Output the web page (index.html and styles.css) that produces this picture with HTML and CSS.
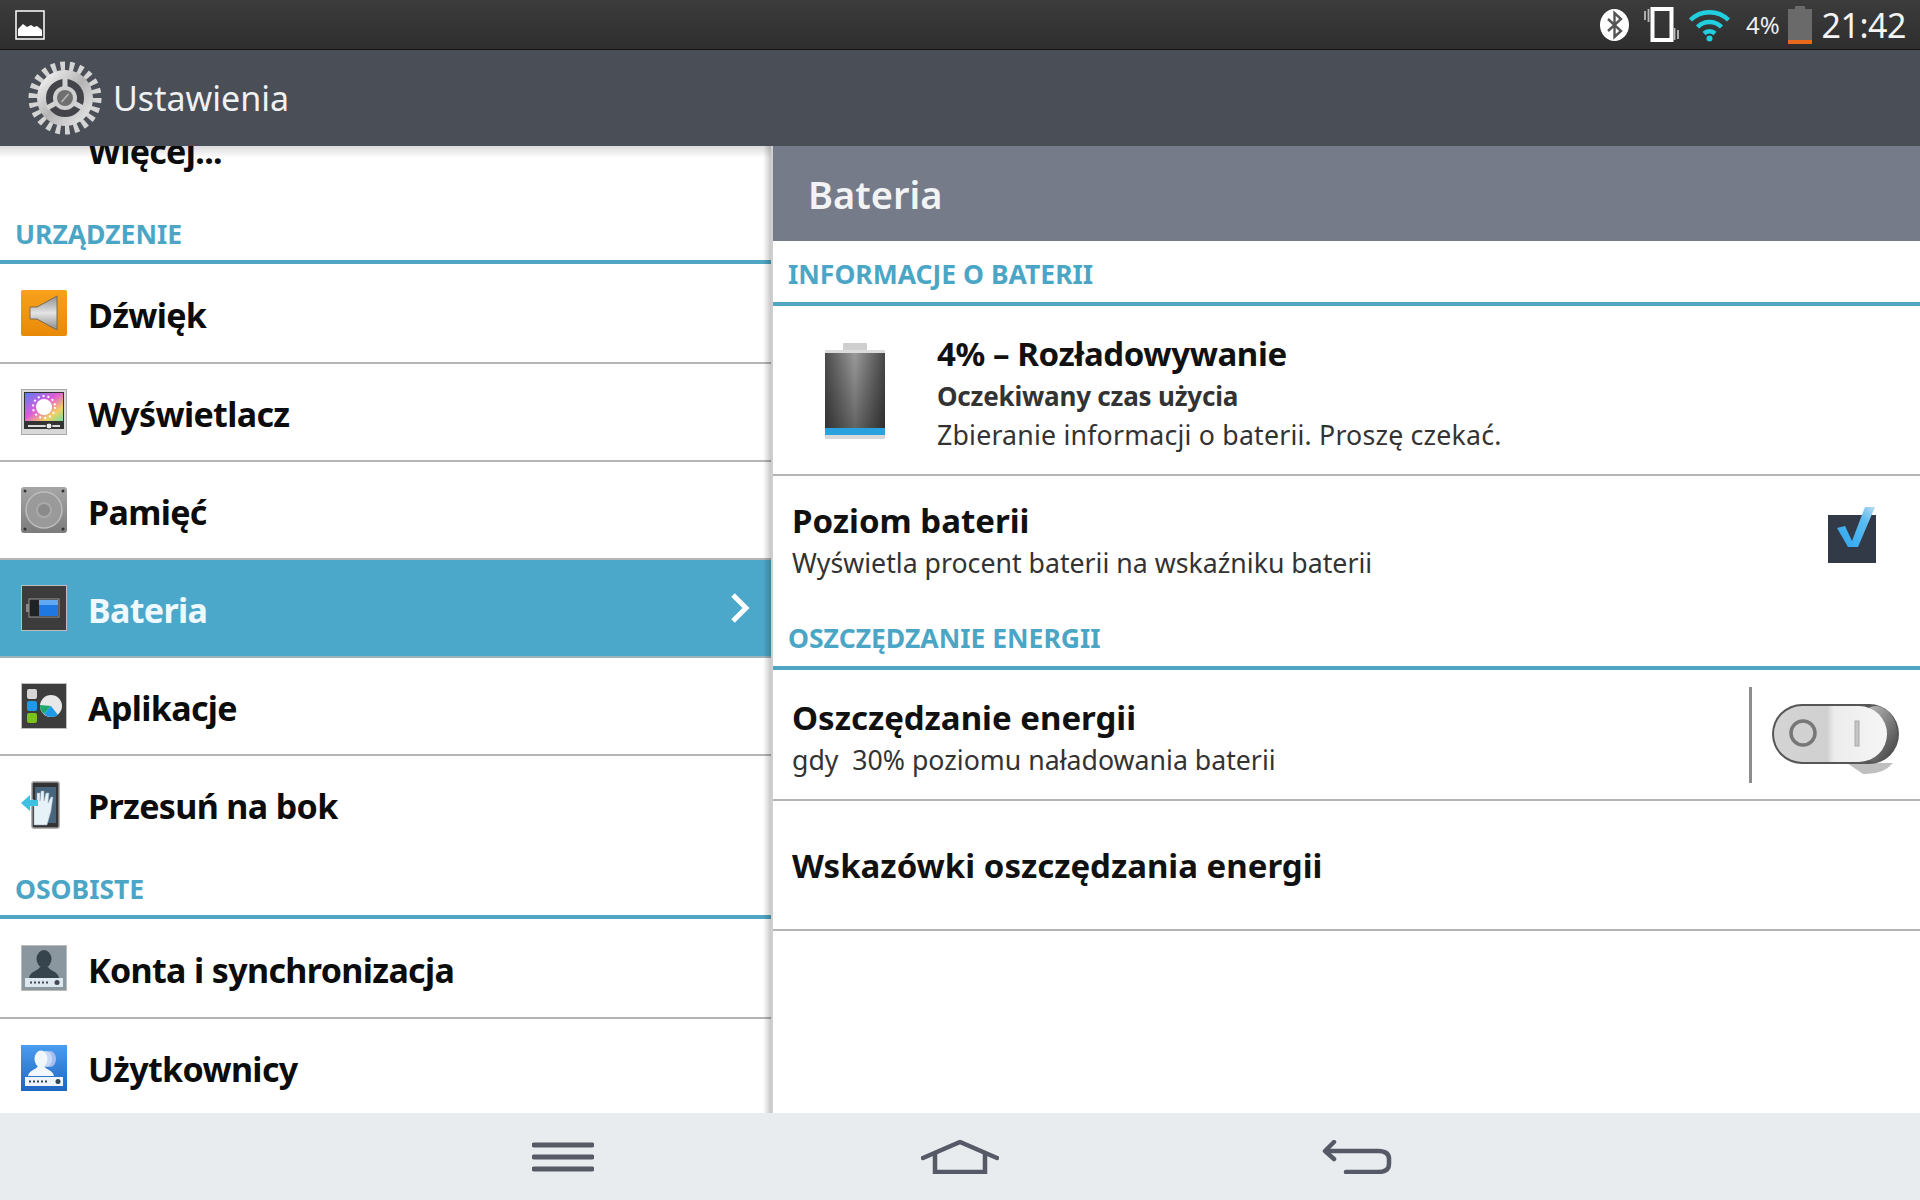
FILE: index.html
```html
<!DOCTYPE html>
<html lang="pl">
<head>
    <meta charset="UTF-8">
    <title>Ustawienia</title>
    <link rel="stylesheet" href="styles.css">
</head>
<body>

    <svg class="defs" width="0" height="0">
        <defs>
            <linearGradient id="steel" x1="0" y1="0" x2="1" y2="1">
                <stop offset="0" stop-color="#f4f4f4"/>
                <stop offset=".5" stop-color="#b4b4b4"/>
                <stop offset="1" stop-color="#e6e6e6"/>
            </linearGradient>
            <linearGradient id="cell" x1="0" y1="0" x2="1" y2="0">
                <stop offset="0" stop-color="#4c4c4c"/>
                <stop offset=".5" stop-color="#9a9a9a"/>
                <stop offset="1" stop-color="#474747"/>
            </linearGradient>
            <linearGradient id="cellshade" x1="0" y1="0" x2="0" y2="1">
                <stop offset="0" stop-color="#000" stop-opacity="0"/>
                <stop offset="1" stop-color="#000" stop-opacity=".35"/>
            </linearGradient>
            <linearGradient id="orange" x1="0" y1="0" x2="0" y2="1">
                <stop offset="0" stop-color="#f7a11c"/>
                <stop offset="1" stop-color="#e88a08"/>
            </linearGradient>
            <linearGradient id="horn" x1="0" y1="0" x2="0" y2="1">
                <stop offset="0" stop-color="#8d8d8d"/>
                <stop offset=".5" stop-color="#e4e4e4"/>
                <stop offset="1" stop-color="#8a8a8a"/>
            </linearGradient>
            <linearGradient id="rainbow" x1="0" y1="0" x2="1" y2="1">
                <stop offset="0" stop-color="#5a7cf0"/>
                <stop offset=".45" stop-color="#e05cd8"/>
                <stop offset=".75" stop-color="#f4d060"/>
                <stop offset="1" stop-color="#70e0a0"/>
            </linearGradient>
            <linearGradient id="disk" x1="0" y1="0" x2="0" y2="1">
                <stop offset="0" stop-color="#a6a6a6"/>
                <stop offset="1" stop-color="#7c7c7c"/>
            </linearGradient>
            <linearGradient id="user" x1="0" y1="0" x2="0" y2="1">
                <stop offset="0" stop-color="#4a9df0"/>
                <stop offset="1" stop-color="#1f66c0"/>
            </linearGradient>
            <linearGradient id="tick" x1="0" y1="1" x2="1" y2="0">
                <stop offset="0" stop-color="#2ba6ee"/>
                <stop offset=".7" stop-color="#5dbcf2"/>
                <stop offset="1" stop-color="#b9dbee"/>
            </linearGradient>
            <linearGradient id="knob" x1="0" y1="0" x2="1" y2="0">
                <stop offset="0" stop-color="#d4d4d4"/>
                <stop offset=".47" stop-color="#d0d0d0"/>
                <stop offset=".53" stop-color="#ececec"/>
                <stop offset="1" stop-color="#f6f6f6"/>
            </linearGradient>
            <linearGradient id="crescent" x1="0" y1="0" x2="1" y2="1">
                <stop offset="0" stop-color="#d0d0d0"/>
                <stop offset="1" stop-color="#3a3a3a"/>
            </linearGradient>
        </defs>
    </svg>

    <header class="statusbar">
        <svg class="st-photo" width="30" height="30" viewBox="0 0 30 30">
            <rect x="1" y="1" width="28" height="28" fill="#333" stroke="#fff" stroke-width="1.500"/>
            <path d="M3 26V19l5-5 4 3 4-2 3 2 3-1 5 4v6z" fill="#fff"/>
        </svg>
        <div class="st-right">
            <svg width="29" height="32" viewBox="0 0 29 32">
                <ellipse cx="14.500" cy="16" rx="14.500" ry="16" fill="#fff"/>
                <path d="M8 10l13 12-6.500 6V4L21 10 8 22" fill="none" stroke="#555" stroke-width="2.400"/>
            </svg>
            <svg class="st-rotate" width="37" height="35" viewBox="0 0 37 35">
                <rect x="9.500" y="2" width="19" height="31" fill="none" stroke="#fff" stroke-width="4"/>
                <path d="M2 4v9M5.500 2v13M31.500 21v12M35 23v9" stroke="#bbb" stroke-width="1.800"/>
            </svg>
            <svg class="st-wifi" width="43" height="34" viewBox="0 0 43 34">
                <g fill="none" stroke="#22cfe0" stroke-width="4.500">
                    <path d="M2.500 12a27 27 0 0 1 38 0"/>
                    <path d="M9.500 19a17 17 0 0 1 24 0"/>
                    <path d="M16 25.500a8 8 0 0 1 11 0"/>
                </g>
                <circle cx="21.500" cy="30.500" r="3" fill="#22cfe0"/>
            </svg>
            <span class="st-pct">4%</span>
            <svg class="st-batt" width="24" height="38" viewBox="0 0 24 38">
                <path d="M7 0h10v3h7v35H0V3h7z" fill="#6a6a6a"/>
                <rect y="34" width="24" height="4" fill="#e8691c"/>
            </svg>
            <span class="st-time">21:42</span>
        </div>
    </header>

    <div class="actionbar">
        <svg class="gear" width="74" height="74" viewBox="0 0 74 74">
            <circle cx="37" cy="37" r="32" fill="none" stroke="#d4d4d4" stroke-width="9" pathLength="220" stroke-dasharray="5 5"/>
            <circle cx="37" cy="37" r="23.500" fill="#42444a" stroke="url(#steel)" stroke-width="9"/>
            <path d="M37 37V16M37 37l18 10M37 37L19 47" stroke="#d2d2d2" stroke-width="5"/>
            <circle cx="37" cy="37" r="12" fill="#cfcfcf"/>
            <circle cx="37" cy="37" r="8" fill="#6f6f6f"/>
            <path d="M33.500 41l7-8" stroke="#bbb" stroke-width="1.500"/>
        </svg>
        <h1>Ustawienia</h1>
    </div>

    <div class="panes">
        <aside class="left">
            <div class="row row-first"><span class="row-name">Więcej...</span></div>

            <h3 class="section">URZĄDZENIE</h3>
            <div class="row row-lead">
                <svg class="ico" width="46" height="46" viewBox="0 0 46 46">
                    <rect width="46" height="46" rx="2" fill="url(#orange)"/>
                    <path d="M9 17h7L36 6v34L16 29H9z" fill="url(#horn)" stroke="#7a6a50"/>
                </svg>
                <span class="row-name">Dźwięk</span>
            </div>
            <div class="row">
                <svg class="ico" width="46" height="46" viewBox="0 0 46 46">
                    <rect x=".5" y=".5" width="45" height="45" fill="#d8d8d8" stroke="#aaa"/>
                    <rect x="3" y="3" width="40" height="37" fill="#333"/>
                    <rect x="4" y="4" width="38" height="28" fill="url(#rainbow)"/>
                    <circle cx="23" cy="18" r="8" fill="#fff"/>
                    <circle cx="23" cy="18" r="11" fill="none" stroke="#fff" stroke-width="2" stroke-dasharray="2 3"/>
                    <path d="M7 37h32" stroke="#ddd" stroke-width="2"/>
                    <circle cx="28" cy="37" r="3" fill="#eee" stroke="#333"/>
                </svg>
                <span class="row-name">Wyświetlacz</span>
            </div>
            <div class="row">
                <svg class="ico" width="46" height="46" viewBox="0 0 46 46">
                    <rect width="46" height="46" rx="3" fill="url(#disk)"/>
                    <circle cx="23" cy="23" r="18" fill="#9a9a9a" stroke="#bcbcbc" stroke-width="1.500"/>
                    <circle cx="23" cy="23" r="7" fill="#8a8a8a" stroke="#a9a9a9" stroke-width="2"/>
                    <g fill="#333">
                        <circle cx="4" cy="4" r="1.500"/>
                        <circle cx="42" cy="4" r="1.500"/>
                        <circle cx="4" cy="42" r="1.500"/>
                        <circle cx="42" cy="42" r="1.500"/>
                    </g>
                </svg>
                <span class="row-name">Pamięć</span>
            </div>
            <div class="row row-on">
                <svg class="ico" width="46" height="46" viewBox="0 0 46 46">
                    <rect x=".5" y=".5" width="45" height="45" fill="#3c3c3c" stroke="#bdbdbd"/>
                    <rect x="8" y="14" width="30" height="18" fill="#222" stroke="#999"/>
                    <rect x="18" y="15" width="19" height="16" fill="#1f78e0"/>
                    <rect x="18" y="15" width="19" height="5" fill="#62a8f2"/>
                    <rect x="5" y="19" width="3" height="8" fill="#888"/>
                </svg>
                <span class="row-name">Bateria</span>
                <svg class="chev" width="20" height="32" viewBox="0 0 20 32">
                    <path d="M3 3l13 13L3 29" fill="none" stroke="#fff" stroke-width="5"/>
                </svg>
            </div>
            <div class="row">
                <svg class="ico" width="46" height="46" viewBox="0 0 46 46">
                    <rect x=".5" y=".5" width="45" height="45" fill="#3d3d3d" stroke="#c0c0c0"/>
                    <rect x="6" y="6" width="10" height="10" rx="2" fill="#d6d6d6"/>
                    <rect x="6" y="18" width="10" height="10" rx="2" fill="#1f9ae8"/>
                    <rect x="6" y="30" width="10" height="10" rx="2" fill="#7cc21c"/>
                    <circle cx="30" cy="23" r="11" fill="#e8e8e8"/>
                    <path d="M30 23L19 22a11 11 0 0 0 4 9z" fill="#1ca86a"/>
                    <path d="M30 23L23 31a11 11 0 0 0 14 1z" fill="#1f9ae8"/>
                </svg>
                <span class="row-name">Aplikacje</span>
            </div>
            <div class="row row-last">
                <svg class="ico" width="46" height="48" viewBox="0 0 46 48">
                    <rect x="11" y="1" width="27" height="46" rx="2" fill="#333" stroke="#999" stroke-width="1.500"/>
                    <rect x="14" y="6" width="21" height="36" fill="#48657e"/>
                    <path d="M13 44V26l-3-8 3 1 3 5V12h3v8l1-10h3v10l2-8h3l-1 10 3-6h2l-2 14-4 14z" fill="#e6f1f8" stroke="#9ab" stroke-width=".5"/>
                    <path d="M0 22l9-8v5h8v6H9v5z" fill="#3fc0e0"/>
                </svg>
                <span class="row-name">Przesuń na bok</span>
            </div>

            <h3 class="section">OSOBISTE</h3>
            <div class="row row-lead">
                <svg class="ico" width="46" height="46" viewBox="0 0 46 46">
                    <rect x=".5" y=".5" width="45" height="45" fill="#8b979f" stroke="#bbb"/>
                    <ellipse cx="23" cy="14" rx="7.500" ry="9" fill="#36444e"/>
                    <path d="M8 33c1-7 9-7 11-11h8c2 4 10 4 11 11z" fill="#36444e"/>
                    <rect x="4" y="33" width="38" height="9" fill="#dce8ee"/>
                    <path d="M9 37.500h19" stroke="#445" stroke-width="2" stroke-dasharray="2 2"/>
                    <circle cx="36" cy="37.500" r="2.500" fill="#445"/>
                </svg>
                <span class="row-name">Konta i synchronizacja</span>
            </div>
            <div class="row row-last">
                <svg class="ico" width="46" height="46" viewBox="0 0 46 46">
                    <rect width="46" height="46" fill="url(#user)"/>
                    <ellipse cx="29" cy="14" rx="6" ry="8" fill="#a8bdf0"/>
                    <ellipse cx="25" cy="14" rx="6" ry="8" fill="#c8daf6"/>
                    <ellipse cx="20" cy="14" rx="6.500" ry="8.500" fill="#f2f7fc"/>
                    <path d="M7 31c1-6 8-6 10-10h6c2 4 9 4 10 10z" fill="#f2f7fc"/>
                    <rect x="4" y="32" width="38" height="9" fill="#eef4fa"/>
                    <path d="M8 36.500h19" stroke="#345" stroke-width="2" stroke-dasharray="2 2"/>
                    <circle cx="37" cy="36.500" r="2.500" fill="#345"/>
                </svg>
                <span class="row-name">Użytkownicy</span>
            </div>
        </aside>

        <main class="right">
            <h2 class="pane-title">Bateria</h2>

            <h3 class="section section-r">INFORMACJE O BATERII</h3>
            <div class="info">
                <svg class="cell" width="60" height="96" viewBox="0 0 60 96">
                    <rect x="18" y="0" width="24" height="8" rx="1" fill="#cfcfcf"/>
                    <rect x="0" y="7" width="60" height="89" rx="2" fill="url(#cell)"/>
                    <rect x="0" y="10" width="60" height="75" fill="url(#cellshade)"/>
                    <rect x="0" y="7" width="60" height="3" fill="#dcdcdc"/>
                    <rect x="0" y="85" width="60" height="7" fill="#2aa2de"/>
                    <rect x="0" y="92" width="60" height="4" fill="#d8d8d8"/>
                </svg>
                <div class="info-text">
                    <p class="info-title">4% – Rozładowywanie</p>
                    <p class="info-sub">Oczekiwany czas użycia</p>
                    <p class="desc desc-wide">Zbieranie informacji o baterii. Proszę czekać.</p>
                </div>
            </div>
            <div class="opt opt-level">
                <div>
                    <p class="opt-name">Poziom baterii</p>
                    <p class="desc">Wyświetla procent baterii na wskaźniku baterii</p>
                </div>
                <svg class="check" width="52" height="58" viewBox="0 0 52 58">
                    <rect x="0" y="9" width="48" height="48" fill="#333a47"/>
                    <path d="M9 22l8-2 7 15L37 1h10L30 41h-10z" fill="url(#tick)"/>
                </svg>
            </div>

            <h3 class="section section-r section-low">OSZCZĘDZANIE ENERGII</h3>
            <div class="opt opt-save">
                <div>
                    <p class="opt-name">Oszczędzanie energii</p>
                    <p class="desc desc-pre">gdy  30% poziomu naładowania baterii</p>
                </div>
                <div class="toggle-wrap">
                    <svg class="toggle" width="130" height="72" viewBox="0 0 130 72">
                        <path d="M76 60h46q-10 12-30 11z" fill="#8a8a8a" opacity=".55"/>
                        <rect x="1" y="1" width="127" height="60" rx="30" fill="#565656"/>
                        <rect x="84" y="3" width="42" height="56" rx="28" fill="url(#crescent)"/>
                        <rect x="3" y="3" width="113" height="56" rx="28" fill="url(#knob)"/>
                        <circle cx="32" cy="30" r="12" fill="none" stroke="#777" stroke-width="3.500"/>
                        <rect x="84" y="18" width="4" height="25" fill="#c4c4c4" stroke="#aaa"/>
                    </svg>
                </div>
            </div>
            <div class="opt opt-tips">
                <p class="opt-name">Wskazówki oszczędzania energii</p>
            </div>
        </main>
    </div>

    <nav class="navbar">
        <svg width="62" height="32" viewBox="0 0 62 32">
            <path d="M2 4h58M2 16h58M2 28h58" stroke="#565a66" stroke-width="5" stroke-linecap="round"/>
        </svg>
        <svg width="78" height="34" viewBox="0 0 78 34">
            <path d="M2 18L39 2l37 16" fill="none" stroke="#565a66" stroke-width="4.500" stroke-linecap="round" stroke-linejoin="round"/>
            <path d="M14 14v18h50V14" fill="none" stroke="#565a66" stroke-width="4.500"/>
        </svg>
        <svg class="nav-back" width="70" height="34" viewBox="0 0 70 34">
            <path d="M12 2L3 11l9 8" fill="none" stroke="#565a66" stroke-width="4.500" stroke-linecap="round" stroke-linejoin="round"/>
            <path d="M4 11h52q11 0 11 8v5q0 8-11 8H24" fill="none" stroke="#565a66" stroke-width="4.500" stroke-linecap="round"/>
        </svg>
    </nav>

</body>
</html>
```

FILE: styles.css
```css
body{
    margin: 0;
    width: 1920px;
    height: 1200px;
    overflow: hidden;
    font-family: "Noto Sans", "Open Sans", sans-serif;
    color: #111;
    background-color: white;
}
p, h1, h2, h3{
    margin: 0;
}
.defs{
    display: block;
    height: 0;
}

.statusbar{
    height: 49px;
    border-bottom: 1px solid #111;
    background: linear-gradient(#3c3c3c, #2e2e2e);
    display: flex;
    align-items: center;
    justify-content: space-between;
    padding-left: 15px;
    padding-right: 14px;
}
.st-right{
    display: flex;
    align-items: center;
}
.st-rotate{
    margin-left: 14px;
}
.st-wifi{
    margin-left: 8px;
}
.st-pct{
    margin-left: 15px;
    color: #eee;
    font-size: 24px;
}
.st-batt{
    margin-left: 8px;
}
.st-time{
    margin-left: 10px;
    color: #f4f4f4;
    font-size: 34px;
    font-family: "Noto Sans", sans-serif;
    letter-spacing: -.5px;
}

.actionbar{
    height: 96px;
    background-color: #4a4e57;
    display: flex;
    align-items: center;
    padding-left: 28px;
}
.actionbar h1{
    margin-left: 11px;
    font-size: 34px;
    font-weight: 400;
    color: #f0f1f3;
}

.panes{
    display: flex;
    height: 967px;
    overflow: hidden;
}

.left{
    width: 771px;
    flex: none;
    position: relative;
    overflow: hidden;
}
.left::before{
    content: "";
    position: absolute;
    inset: 0 0 auto 0;
    height: 12px;
    background: linear-gradient(rgba(0, 0, 0, .14), transparent);
}
.left::after{
    content: "";
    position: absolute;
    inset: 0 0 0 auto;
    width: 8px;
    background: linear-gradient(to right, transparent, rgba(0, 0, 0, .22));
}

.section{
    height: 65px;
    padding-left: 15px;
    padding-bottom: 8px;
    box-sizing: border-box;
    display: flex;
    align-items: flex-end;
    border-bottom: 4px solid #4fa5c2;
    font-size: 26.5px;
    font-weight: 700;
    color: #4ba6c6;
}

.row{
    height: 98px;
    box-sizing: border-box;
    border-bottom: 2px solid #b4b4b4;
    display: flex;
    align-items: center;
    padding-left: 21px;
    position: relative;
}
.row-lead{
    height: 100px;
}
.row-first{
    height: 100px;
    margin-top: -47px;
    border-bottom: none;
}
.row-last{
    border-bottom: none;
}
.row-name{
    position: absolute;
    left: 88px;
    margin-top: 4px;
    font-size: 34px;
    font-weight: 700;
    letter-spacing: -.64px;
    color: #0c0c0c;
}
.row-last .row-name{
    margin-top: 1px;
}
.row-on{
    background-color: #4ba8ca;
    border-bottom-color: #9fb4bd;
}
.row-on .row-name{
    color: #eefaff;
}
.chev{
    margin-left: auto;
    margin-right: 21px;
}

.right{
    flex: 1;
    border-left: 2px solid #cfcfcf;
}
.pane-title{
    height: 95px;
    background-color: #757b88;
    display: flex;
    align-items: center;
    padding-left: 35px;
    font-size: 38px;
    font-weight: 600;
    color: #f2f3f4;
}
.section-r{
    height: 65px;
    padding-bottom: 10px;
}
.section-low{
    height: 72px;
}

.info{
    height: 170px;
    box-sizing: border-box;
    border-bottom: 2px solid #b4b4b4;
    display: flex;
    align-items: center;
    padding-left: 52px;
    padding-top: 6px;
}
.cell{
    margin-top: -4px;
}
.info-text{
    margin-left: 52px;
}
.info-title{
    font-size: 33px;
    font-weight: 700;
    letter-spacing: -.4px;
    line-height: 44px;
}
.info-sub{
    font-size: 26px;
    font-weight: 700;
    letter-spacing: -.2px;
    color: #333;
    line-height: 40px;
}
.desc{
    font-size: 26.7px;
    color: #333;
    line-height: 38px;
}
.desc-wide{
    letter-spacing: .2px;
}
.desc-pre{
    white-space: pre;
}

.opt{
    display: flex;
    align-items: center;
    justify-content: space-between;
    padding-left: 19px;
    box-sizing: border-box;
}
.opt-name{
    font-size: 33px;
    font-weight: 700;
    line-height: 46px;
}
.opt-level{
    height: 122px;
    padding-right: 40px;
    padding-top: 6px;
}
.check{
    margin-top: -10px;
}
.opt-save{
    height: 131px;
    padding-top: 4px;
    border-bottom: 2px solid #b4b4b4;
}
.opt-tips{
    height: 130px;
    padding-top: 2px;
    border-bottom: 2px solid #b4b4b4;
}
.toggle-wrap{
    border-left: 3px solid #8c8c8c;
    height: 96px;
    margin-top: -4px;
    display: flex;
    align-items: center;
    padding-left: 19px;
    padding-right: 19px;
}
.toggle{
    margin-top: 8px;
}

.navbar{
    height: 87px;
    background-color: #e9ecef;
    display: flex;
    align-items: center;
    justify-content: center;
    gap: 327px;
    padding-left: 4px;
}
.nav-back{
    margin-left: -4px;
}
```
